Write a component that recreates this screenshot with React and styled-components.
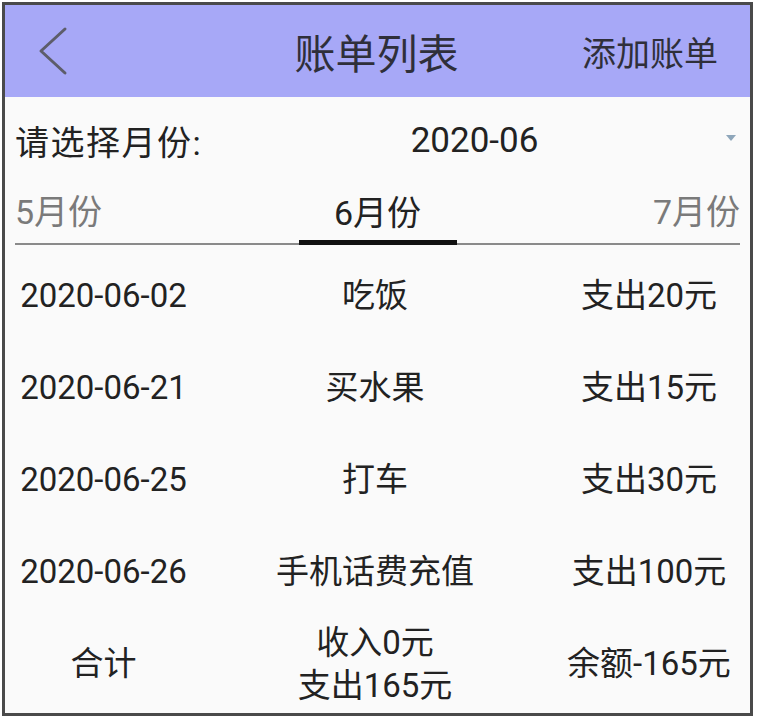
import React from "react";
import styled, { createGlobalStyle } from "styled-components";

const Global = createGlobalStyle`
  html, body { margin: 0; padding: 0; background: #ffffff; }
  body { font-family: Roboto, "Noto Sans CJK SC", sans-serif; }
`;

const Frame = styled.div`
  margin: 2px;
  width: 745px;
  height: 708px;
  border: 3px solid #4a4a4a;
  background: #fafafa;
  display: flex;
  flex-direction: column;
  color: #222;
`;

const Header = styled.div`
  height: 92px;
  background: #a7a8f7;
  display: grid;
  grid-template-columns: 1fr auto 1fr;
  align-items: center;
  padding: 0 32px 0 30px;
`;

const BackButton = styled.div`
  display: flex;
  align-items: center;
`;

const Title = styled.div`
  font-size: 41px;
  color: #2f2f3a;
`;

const Action = styled.div`
  justify-self: end;
  font-size: 34px;
  color: #2f2f3a;
`;

const SelectRow = styled.div`
  height: 86px;
  display: grid;
  grid-template-columns: 1fr auto 1fr;
  align-items: center;
  padding: 0 14px 0 10px;
  font-size: 34px;
`;

const Label = styled.div`
  font-size: 34px;
  letter-spacing: 1.5px;
`;

const Value = styled.div`
  font-size: 35px;
  transform: translateX(99px);
`;

const Caret = styled.div`
  justify-self: end;
  width: 0;
  height: 0;
  border-left: 5px solid transparent;
  border-right: 5px solid transparent;
  border-top: 6px solid #8ea6ba;
  margin-top: -4px;
`;

const Tabs = styled.div`
  margin: 0 10px 0 10px;
  display: grid;
  grid-template-columns: 1fr auto 1fr;
  border-bottom: 2px solid #8a8a8a;
  height: 60px;
  align-items: stretch;
`;

const Tab = styled.div`
  font-size: 34px;
  color: ${(p) => (p.$active ? "#222" : "#7a7a7a")};
  display: flex;
  align-items: center;
  justify-content: ${(p) => p.$align};
  padding-bottom: 7px;
  ${(p) =>
    p.$active &&
    `
    width: 158px;
    border-bottom: 5px solid #111;
    margin-bottom: -2px;
    padding-bottom: 2px;
  `}
`;

const List = styled.div`
  margin-top: 5px;
  display: flex;
  flex-direction: column;
`;

const Row = styled.div`
  height: ${(p) => p.$h || 92}px;
  display: grid;
  grid-template-columns: 197px 1fr 202px;
  align-items: center;
  font-size: 33px;
`;

const Cell = styled.div`
  text-align: center;
  line-height: 1.3;
`;

const rows = [
  ["2020-06-02", "吃饭", "支出20元"],
  ["2020-06-21", "买水果", "支出15元"],
  ["2020-06-25", "打车", "支出30元"],
  ["2020-06-26", "手机话费充值", "支出100元"],
];

export default function App() {
  return (
    <>
      <Global />
      <Frame>
        <Header>
          <BackButton>
            <svg width="34" height="50" viewBox="0 0 34 50">
              <path d="M30 3 L6 25 L30 47" fill="none" stroke="#5d5d6a" strokeWidth="3" strokeLinecap="round" strokeLinejoin="round" />
            </svg>
          </BackButton>
          <Title>账单列表</Title>
          <Action>添加账单</Action>
        </Header>
        <SelectRow>
          <Label>请选择月份:</Label>
          <Value>2020-06</Value>
          <Caret />
        </SelectRow>
        <Tabs>
          <Tab $align="flex-start">5月份</Tab>
          <Tab $align="center" $active>6月份</Tab>
          <Tab $align="flex-end">7月份</Tab>
        </Tabs>
        <List>
          {rows.map((r) => (
            <Row key={r[0]}>
              <Cell>{r[0]}</Cell>
              <Cell>{r[1]}</Cell>
              <Cell>{r[2]}</Cell>
            </Row>
          ))}
          <Row $h={93}>
            <Cell>合计</Cell>
            <Cell>
              收入0元
              <br />
              支出165元
            </Cell>
            <Cell>余额-165元</Cell>
          </Row>
        </List>
      </Frame>
    </>
  );
}
